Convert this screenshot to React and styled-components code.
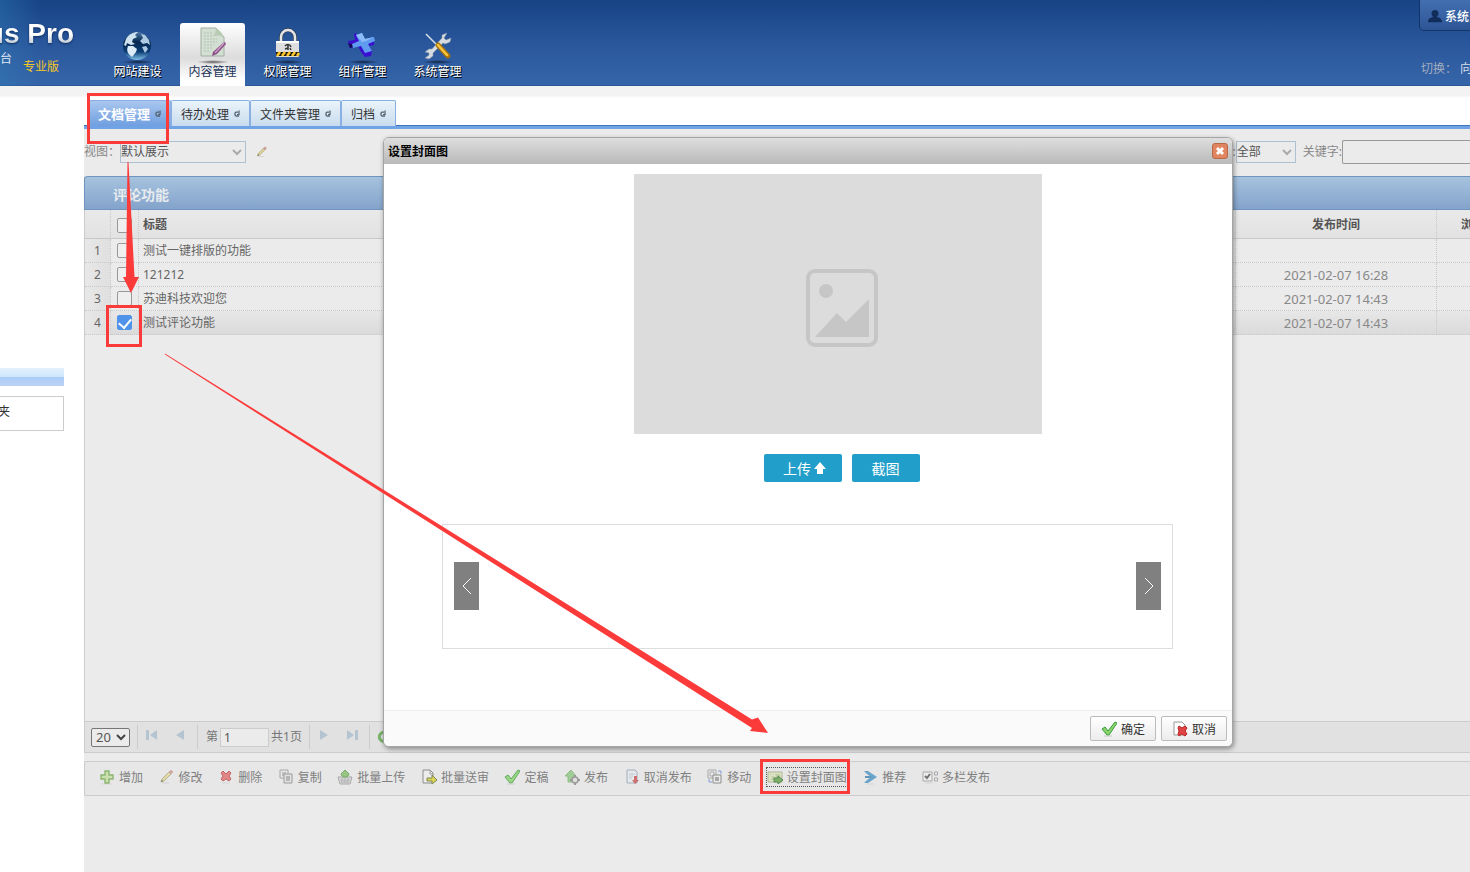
import React from "react";
import styled, { createGlobalStyle, css } from "styled-components";

const navItems = [
  { icon: "globe", label: "网站建设" },
  { icon: "document", label: "内容管理", active: true },
  { icon: "lock", label: "权限管理" },
  { icon: "component", label: "组件管理" },
  { icon: "tools", label: "系统管理" }
];

const tabs = [
  { label: "文档管理", active: true },
  { label: "待办处理" },
  { label: "文件夹管理" },
  { label: "归档" }
];

const rows = [
  { title: "测试一键排版的功能", time: "" },
  { title: "121212", time: "2021-02-07 16:28" },
  { title: "苏迪科技欢迎您", time: "2021-02-07 14:43" },
  { title: "测试评论功能", time: "2021-02-07 14:43", checked: true }
];

const actions = [
  { icon: "add", label: "增加" },
  { icon: "pencil", label: "修改" },
  { icon: "remove", label: "删除" },
  { icon: "copy", label: "复制" },
  { icon: "upload", label: "批量上传" },
  { icon: "submit", label: "批量送审" },
  { icon: "check", label: "定稿" },
  { icon: "publish", label: "发布" },
  { icon: "unpublish", label: "取消发布" },
  { icon: "move", label: "移动" },
  { icon: "cover", label: "设置封面图", focused: true },
  { icon: "recommend", label: "推荐" },
  { icon: "columns", label: "多栏发布" }
];

const navIcons = {
  globe: (
    <>
      <defs>
        <linearGradient id="sea" x1="0" y1="0" x2="0" y2="1">
          <stop offset="0" stopColor="#4f7ba8" />
          <stop offset=".35" stopColor="#06294f" />
          <stop offset=".7" stopColor="#0a3c74" />
          <stop offset="1" stopColor="#7fc0ea" />
        </linearGradient>
      </defs>
      <circle cx="15" cy="21" r="14" fill="url(#sea)" />
      <path d="M4 14c3-5 8-7 12-7l-3 3 2 2-4 2-1 3 3 2-4 1-4-2-1 3-2-1z" fill="#cfe2f0" />
      <path d="M6 21l5 0 4 3-1 3-4 5c-4-3-6-6-4-11z" fill="#dcebf5" />
      <path d="M19 9l4 1 4 5 1 5-3-2-4 1-3-3 3-3zM20 22l4-1 2 3-3 4z" fill="#aecbe3" />
    </>
  ),
  document: (
    <>
      <path d="M4 3h15l8 9v19H4z" fill="#d3dfd2" stroke="#a2b0a1" />
      <path d="M19 3c0 4-2 7-4 8 5-1 9-1 12 2l-3-6z" fill="#b8cbb3" />
      <path
        d="M7 8h8M7 11h8M7 14h13M7 17h13M7 20h10M7 23h9M7 26h6"
        stroke="#b3c3b2"
        strokeDasharray="2 1"
      />
      <path d="M28 17l1 2-9 10-5 2 1-4 10-9z" fill="#8a4d85" />
      <path d="M27 18l-9 10" stroke="#c99bc4" strokeWidth="1.5" />
    </>
  ),
  lock: (
    <>
      <path d="M9 17v-5a7 7 0 0 1 14 0v5" fill="none" stroke="#39414d" strokeWidth="4" />
      <path d="M9 17v-5a7 7 0 0 1 14 0v5" fill="none" stroke="#e4e6e8" strokeWidth="2.500" />
      <rect x="4" y="16" width="23" height="16" rx="1" fill="#dedede" />
      <path d="M4 17h23" stroke="#fff" strokeWidth="2" />
      <path d="M4 27h23v4H4z" fill="#1d1a12" />
      <path d="M5 31l3-4M10 31l3-4M15 31l3-4M20 31l3-4M25 31l2-3" stroke="#ffc72c" strokeWidth="2.500" />
      <path d="M13 21c2-2 5-2 6 1M16 20v5M13 24l3-1M18 23l1 2" fill="none" stroke="#333" strokeWidth="1.500" />
    </>
  ),
  component: (
    <>
      <path d="M1 17l3 2 8-1 1-7-5-3-1 1 1 6-7 1zM1 18l2 5 8-2 3 6 4 5 6-1 1-5-3-5 5-1v-5l-9 2z" fill="#3a0fd0" />
      <path d="M1 18l2 5 8-2v-3l-7 1z" fill="#170a58" />
      <path d="M9 10l6-2 3 6 9-2 1 4-7 3 4 7-7 2-4-7-8 2-1-4 7-3z" fill="#5f9cf0" />
      <path d="M9 10l6-2 3 6 9-2-8 4-4 1z" fill="#8bbcf8" />
    </>
  ),
  tools: (
    <>
      <path d="M25 8l-3 5 2 2 5-2-1 4-5 2-2-1-10 10v3l-4 3-4-1 4-3v-2l-4-1 4-3h3l10-11v-3z" fill="#d5dbe0" stroke="#8795a3" strokeWidth=".5" />
      <path d="M4 9l12 12" stroke="#d8dfe5" strokeWidth="1.500" />
      <path d="M16 20l10 11" stroke="#a8730d" strokeWidth="5" strokeLinecap="round" />
      <path d="M16 20l9 10" stroke="#f7c63f" strokeWidth="2.500" strokeLinecap="round" />
    </>
  )
};

const icons = {
  reload: <path d="M12 12H6l-2-2V6l2-2h4M12 1v8H8" fill="none" stroke="#526170" strokeWidth="2.500" />,
  pencil: (
    <>
      <path d="M3 14h7" stroke="#ccc" />
      <path d="M2 13l1-3 7-7 2 2-7 7z" fill="#e3d795" stroke="#9b9369" strokeWidth=".8" />
      <path d="M10 3l2-2 2 2-2 2z" fill="#d49a96" stroke="#a87" strokeWidth=".5" />
      <path d="M2 13l1-2 1 1z" fill="#444" />
    </>
  ),
  add: (
    <>
      <path d="M3 15h10" stroke="#d3d3d3" />
      <path d="M6 2h4v4h4v4h-4v4H6v-4H2V6h4z" fill="#c5dfa0" stroke="#76a954" strokeWidth="1.400" />
    </>
  ),
  remove: (
    <>
      <path d="M4 14h8" stroke="#d3d3d3" />
      <path d="M3 4l2-2 3 3 3-3 2 2-2 3 2 3-2 2-3-2-3 2-2-2 2-3z" fill="#e07070" stroke="#b94444" />
    </>
  ),
  copy: (
    <>
      <path d="M2 1h8v8H2z" fill="#e6e6e6" stroke="#999" />
      <path d="M4 3h4v4H4z" fill="#b5b5b5" />
      <path d="M6 5h8v9H6z" fill="#e0e0e0" stroke="#888" />
      <path d="M8 7h4v5H8z" fill="#aaa" />
    </>
  ),
  upload: (
    <>
      <path d="M1 8h14l-2 7H3z" fill="#d7d7d7" stroke="#999" />
      <path d="M3 11h10M4 13h8M5 9v5M8 9v5M11 9v5" stroke="#aaa" />
      <path d="M8 1l4 4-1 2h-1v1H6V7H5L4 5z" fill="#86bf6c" stroke="#5a9b48" />
    </>
  ),
  submit: (
    <>
      <path d="M2 1h7l3 3v10H2z" fill="#eee" stroke="#777" />
      <path d="M9 1v4h3" fill="none" stroke="#888" />
      <path d="M6 9h5V6l5 5-5 4v-3H6z" fill="#d8cf35" stroke="#65752e" />
    </>
  ),
  check: (
    <>
      <path d="M1 8l3-2 3 4 7-9 2 1-8 12H6z" fill="#8bd36d" stroke="#389b3a" />
      <path d="M3 15h8" stroke="#c6c6c6" />
    </>
  ),
  publish: (
    <>
      <path d="M7 1l5 6H9v6H4V7H1z" fill="#8fc784" stroke="#79b26f" />
      <circle cx="11" cy="11" r="3" fill="#ddd" stroke="#888" strokeWidth="1.500" />
      <path d="M11 6v2M11 14v2M6 11h2M14 11h2" stroke="#888" strokeWidth="2" />
    </>
  ),
  unpublish: (
    <>
      <path d="M3 1h8l2 2v11H3z" fill="#e6e9ed" stroke="#91a0b3" />
      <path d="M5 5h6M5 7h4M5 9h3" stroke="#b5c5cf" />
      <path d="M10 7h3v4h2l-4 4-3-4h2z" fill="#c95050" />
    </>
  ),
  move: (
    <>
      <path d="M1 1h8v8H1zM3 3h4v4H3z" fill="#eee" stroke="#999" />
      <path d="M6 6h8v8H6z" fill="#eee" stroke="#777" />
      <path d="M8 8h4v4H8z" fill="#999" />
      <path d="M11 2h3v3M5 13H2v-3" fill="none" stroke="#718bd1" />
    </>
  ),
  cover: (
    <>
      <path d="M1 3h14v10H1z" fill="#dce4b9" stroke="#9fa687" />
      <path d="M3 5h10v6H3z" fill="#b6c795" />
      <path d="M4 10V6h4v3" fill="none" stroke="#eef4d9" />
      <path d="M7 9h4V7l5 4-5 4v-2H7z" fill="#63a24a" stroke="#39742f" />
    </>
  ),
  recommend: (
    <>
      <path d="M2 2h4l9 6-9 6H2l3-3 4-3-4-3z" fill="#4b94c4" />
      <path d="M3 7h6v2H3z" fill="#3c83b5" />
      <path d="M4 15h8" stroke="#d0d0d0" />
    </>
  ),
  columns: (
    <>
      <path d="M1 3h9v9H1z" fill="#eee" stroke="#999" />
      <path d="M3 7l2 2 3-4" fill="none" stroke="#555" strokeWidth="2" />
      <path d="M12.500 3h3v3h-3zM12.500 9h3v3h-3z" fill="#eee" stroke="#999" />
      <path d="M3 14h8" stroke="#d0d0d0" />
    </>
  ),
  cancel: (
    <>
      <path d="M2 1h8l3 3v10H2z" fill="#fff" stroke="#999" />
      <path d="M6 7l1-2 3 2 3-2 2 2-2 3 2 3-2 2-3-2-3 2-1-2 1-3z" fill="#e04444" stroke="#b82525" />
    </>
  ),
  first: <path d="M2 3h3v10H2zM13 3v10L6 8z" fill="#b4c4d0" />,
  prev: <path d="M12 3v10L4 8z" fill="#b4c4d0" />,
  next: <path d="M4 3v10l8-5z" fill="#b4c4d0" />,
  last: <path d="M3 3v10l7-5zM11 3h3v10h-3z" fill="#b4c4d0" />,
  refresh: <path d="M13 4a6 5 0 1 0 1 7" fill="none" stroke="#79b36a" strokeWidth="3" />
};

const Icon = ({ name, size = 16 }) => (
  <Svg viewBox="0 0 16 16" width={size} height={size} aria-hidden="true">
    {icons[name]}
  </Svg>
);

const Select = ({ id, label, value, kind }) => (
  <SelectBox kind={kind}>
    <NativeSelect id={id} aria-label={label} kind={kind} defaultValue={value}>
      <option>{value}</option>
    </NativeSelect>
    <Chevron viewBox="0 0 10 8" $dark={kind === "page"} aria-hidden="true">
      <path d="M1 2l4 4 4-4" />
    </Chevron>
  </SelectBox>
);

const Header = () => (
  <TopBar>
    <Brand>
      <Wordmark>
        <span>us Pro</span>
      </Wordmark>
      <Tagline>
        <span>台</span>
        <Edition>专业版</Edition>
      </Tagline>
    </Brand>
    <Nav>
      {navItems.map(item => (
        <NavLink href="#" key={item.label} $active={item.active}>
          <NavPicture viewBox="0 0 32 38" aria-hidden="true">
            <defs>
              <radialGradient id={"shade-" + item.icon}>
                <stop offset="0" stopColor="#000" stopOpacity=".6" />
                <stop offset="1" stopColor="#000" stopOpacity="0" />
              </radialGradient>
            </defs>
            <ellipse cx="16" cy="37" rx="16" ry="2" fill={"url(#shade-" + item.icon + ")"} />
            {navIcons[item.icon]}
          </NavPicture>
          {item.label}
        </NavLink>
      ))}
    </Nav>
    <Account>
      <UserButton>
        <svg width="14" height="14" viewBox="0 0 16 16" aria-hidden="true">
          <path d="M4 5a4 4 0 0 1 8 0c0 2-1 3-2 4 4 1 6 2 6 6H0c0-4 2-5 6-6-1-1-2-2-2-4z" fill="#122d5c" />
        </svg>
        系统
      </UserButton>
      <Switcher>
        <span>切换：</span>
        <SiteLink href="#">向</SiteLink>
      </Switcher>
    </Account>
  </TopBar>
);

const CoverDialog = () => (
  <Dialog role="dialog" aria-labelledby="dialog-title">
    <DialogHeader>
      <DialogTitle id="dialog-title">设置封面图</DialogTitle>
      <CloseButton aria-label="关闭">
        <svg width="10" height="10" viewBox="0 0 10 10">
          <path d="M2 2l6 6M8 2l-6 6" stroke="#fff" strokeWidth="3" />
        </svg>
      </CloseButton>
    </DialogHeader>
    <DialogBody>
      <PreviewArea>
        <Preview>
          <svg width="72" height="78" viewBox="0 0 72 78" aria-hidden="true">
            <rect x="2" y="2" width="68" height="74" rx="7" fill="none" stroke="#c6c6c6" strokeWidth="4" />
            <ellipse cx="20" cy="22" rx="7" ry="7" fill="#c6c6c6" />
            <path d="M9 68l22-24 9 9 23-23v38z" fill="#c6c6c6" />
          </svg>
        </Preview>
        <PreviewButtons>
          <BlueButton $wide>
            上传
            <svg width="12" height="12" viewBox="0 0 12 12" aria-hidden="true">
              <path d="M6 0l6 7H9v5H3V7H0z" fill="#fff" />
            </svg>
          </BlueButton>
          <BlueButton>截图</BlueButton>
        </PreviewButtons>
      </PreviewArea>
      <Gallery>
        <Arrow aria-label="上一张">
          <svg width="10" height="18" viewBox="0 0 10 18">
            <path d="M9 1L1 9l8 8" fill="none" stroke="#fff" />
          </svg>
        </Arrow>
        <Arrow aria-label="下一张">
          <svg width="10" height="18" viewBox="0 0 10 18">
            <path d="M1 1l8 8-8 8" fill="none" stroke="#fff" />
          </svg>
        </Arrow>
      </Gallery>
    </DialogBody>
    <DialogFooter>
      <FooterButton>
        <Icon name="check" />
        确定
      </FooterButton>
      <FooterButton>
        <Icon name="cancel" />
        取消
      </FooterButton>
    </DialogFooter>
  </Dialog>
);

const App = () => (
  <Page>
    <GlobalStyle />
    <Header />
    <Strip />
    <Body>
      <Sidebar>
        <SideBand />
        <SideBox>文件夹</SideBox>
      </Sidebar>
      <Main>
        <TabBar>
          {tabs.map(tab => (
            <Tab key={tab.label} $active={tab.active}>
              {tab.label}
              <Icon name="reload" size={8} />
            </Tab>
          ))}
        </TabBar>
        <Filters>
          <FilterLabel htmlFor="view">视图：</FilterLabel>
          <Select id="view" value="默认展示" kind="view" />
          <IconButton aria-label="编辑视图" $wide>
            <Icon name="pencil" size={12} />
          </IconButton>
          <FilterEnd>
            <label htmlFor="state">:</label>
            <Select id="state" label="状态" value="全部" kind="state" />
            <KeywordLabel htmlFor="keyword">关键字:</KeywordLabel>
            <Keyword id="keyword" />
          </FilterEnd>
        </Filters>
        <Panel>
          <PanelTitle>评论功能</PanelTitle>
          <GridArea>
            <Grid>
              <colgroup>
                <Col $size="26px" />
                <Col $size="28px" />
                <Col />
                <Col $size="201px" />
                <Col $size="33px" />
              </colgroup>
              <thead>
                <tr>
                  <Th />
                  <Th>
                    <Checkbox aria-label="全选" />
                  </Th>
                  <Th $left>标题</Th>
                  <Th>发布时间</Th>
                  <Th $cut>浏览次数</Th>
                </tr>
              </thead>
              <tbody>
                {rows.map((row, i) => (
                  <Row key={row.title} $selected={row.checked}>
                    <NumberCell>{i + 1}</NumberCell>
                    <Td>
                      <Checkbox aria-label={row.title} defaultChecked={row.checked} />
                    </Td>
                    <Td $left>{row.title}</Td>
                    <Td $time>{row.time}</Td>
                    <Td />
                  </Row>
                ))}
              </tbody>
            </Grid>
          </GridArea>
          <Pager>
            <Select label="每页条数" value="20" kind="page" />
            <Divider />
            <PageIcons>
              <IconButton aria-label="首页">
                <Icon name="first" />
              </IconButton>
              <IconButton aria-label="上一页">
                <Icon name="prev" />
              </IconButton>
            </PageIcons>
            <Divider />
            <PageLabel htmlFor="page">第</PageLabel>
            <PageInput id="page" defaultValue="1" />
            <span>共1页</span>
            <Divider />
            <PageIcons>
              <IconButton aria-label="下一页">
                <Icon name="next" />
              </IconButton>
              <IconButton aria-label="末页">
                <Icon name="last" />
              </IconButton>
            </PageIcons>
            <Divider />
            <IconButton aria-label="刷新">
              <Icon name="refresh" />
            </IconButton>
          </Pager>
        </Panel>
        <ActionBar>
          <ActionList>
            {actions.map(action => (
              <Action key={action.label} $focused={action.focused}>
                <Icon name={action.icon} />
                {action.label}
              </Action>
            ))}
          </ActionList>
        </ActionBar>
      </Main>
    </Body>
    <CoverDialog />
    <Marks viewBox="0 0 1000 800" aria-hidden="true">
      <g fill="none" stroke="#fb3a3a" strokeWidth="3">
        <path d="M88.500 94.500h79v48h-79z" />
        <path d="M107.500 306.500h33v39h-33z" />
        <path d="M761.500 760.500h87v32h-87z" />
      </g>
      <g fill="#fb3a3a">
        <path d="M127.500 162h1l6 115h4.500l-8 16-8-16h3z" />
        <path d="M165 353.500l587 366 6-2 10 15.500-18-2 2-3-587-373.500z" />
      </g>
    </Marks>
  </Page>
);

export default App;

const GlobalStyle = createGlobalStyle`
  * {
    box-sizing: border-box;
  }
  body {
    margin: 0;
    background: #fff;
    overflow: hidden;
  }
  body, button, input, select {
    font-family: "Noto Sans", "Noto Sans CJK SC", sans-serif;
    font-size: 12px;
  }
  button {
    padding: 0;
    border: 0;
    background: none;
    cursor: pointer;
  }
`;

const Page = styled.div`
  position: relative;
  display: flex;
  flex-direction: column;
  min-height: 100vh;
  overflow: hidden;
  color: #333;
  line-height: 18px;
`;

const Svg = styled.svg`
  flex: none;
  display: block;
`;

const TopBar = styled.header`
  display: flex;
  height: 86px;
  background: linear-gradient(#174385, #2d5a9f 60%, #3565a9);
  box-shadow: inset 0 -1px 0 #2b5796;
`;

const Brand = styled.div`
  display: flex;
  flex-direction: column;
  width: 105px;
  padding-top: 18px;
  overflow: hidden;
  background: linear-gradient(90deg, rgba(47, 127, 184, 0.4), rgba(47, 127, 184, 0) 40px);
`;

const Wordmark = styled.div`
  display: flex;
  justify-content: flex-end;
  width: 74px;
  height: 32px;
  font: bold 28px/32px "Liberation Sans", sans-serif;
  white-space: nowrap;
  filter: drop-shadow(0 1px 1px #0d2c5e);
  span {
    background: linear-gradient(#fff 50%, #b9c3d0 85%);
    background-clip: text;
    color: transparent;
  }
`;

const Tagline = styled.div`
  display: flex;
  gap: 11px;
  color: #e4ebf5;
`;

const Edition = styled.span`
  padding-top: 8px;
  color: #f9c81e;
`;

const Nav = styled.nav`
  display: flex;
  align-items: flex-end;
  gap: 10px;
  flex: 1;
`;

const NavLink = styled.a`
  display: flex;
  flex-direction: column;
  align-items: center;
  width: 65px;
  height: 63px;
  padding-top: 2px;
  border-radius: 3px 3px 0 0;
  text-decoration: none;
  color: #fff;
  text-shadow: 1px 1px 0 #000;
  ${props =>
    props.$active &&
    css`
      background: linear-gradient(#fff, #dcdcdc 55%, #fff 90%);
      color: #1b3358;
      text-shadow: none;
    `}
`;

const NavPicture = styled.svg`
  width: 32px;
  height: 38px;
  overflow: visible;
`;

const Account = styled.div`
  width: 51px;
  overflow: hidden;
  white-space: nowrap;
`;

const UserButton = styled.button`
  display: flex;
  align-items: center;
  gap: 3px;
  width: 80px;
  height: 31px;
  padding: 2px 0 0 8px;
  border: 1px solid #143666;
  border-top: 0;
  border-radius: 0 0 0 5px;
  background: linear-gradient(#426fb0, #2d5596);
  font-weight: 500;
  color: #fff;
`;

const Switcher = styled.div`
  display: flex;
  gap: 3px;
  padding: 29px 0 0 2px;
  color: #a3adbf;
`;

const SiteLink = styled.a`
  color: #d5dbe6;
  text-decoration: none;
`;

const Strip = styled.div`
  height: 12px;
  background: linear-gradient(#f3f3f3 80%, #fff);
`;

const Body = styled.div`
  display: flex;
  flex: 1;
`;

const Sidebar = styled.aside`
  flex: none;
  width: 84px;
  padding: 270px 20px 0 0;
`;

const SideBand = styled.div`
  height: 18px;
  background: linear-gradient(#e3f1fd, #cfe5fb 50%, #a9cdf5 50%, #bdd1f7);
`;

const SideBox = styled.div`
  display: flex;
  justify-content: flex-end;
  height: 35px;
  margin-top: 10px;
  padding: 6px 53px 0 0;
  border: 1px solid #ccc;
  border-left: 0;
  overflow: hidden;
  white-space: nowrap;
`;

const Main = styled.main`
  flex: 1;
  min-width: 0;
  padding-top: 2px;
  background: linear-gradient(#fff 27px, #ebebeb 27px);
`;

const TabBar = styled.div`
  display: flex;
  height: 29px;
  padding-left: 4px;
  border-bottom: 3px solid #6fa3e6;
  box-shadow: inset 0 -1px 0 #3f76bd;
`;

const Tab = styled.button`
  display: flex;
  align-items: center;
  gap: 4px;
  height: 26px;
  padding: 0 8px 0 9px;
  border: 1px solid #8ab0e3;
  border-bottom: 0;
  border-radius: 2px 2px 0 0;
  background: linear-gradient(#eaf3fa, #c9dced);
  color: #333;
  ${props =>
    props.$active &&
    css`
      background: linear-gradient(#a9c7ef, #709fe0);
      font-size: 13px;
      font-weight: bold;
      color: #fff;
    `}
`;

const Filters = styled.div`
  display: flex;
  align-items: center;
  height: 47px;
  padding-bottom: 2px;
  color: #888;
`;

const FilterLabel = styled.label`
  width: 36px;
`;

const SelectBox = styled.div`
  display: grid;
  align-items: center;
  justify-items: end;
  width: ${props => ({ view: "126px", state: "60px", page: "39px" }[props.kind])};
`;

const NativeSelect = styled.select`
  grid-area: 1 / 1;
  appearance: none;
  width: 100%;
  height: ${props => (props.kind === "page" ? "19px" : "22px")};
  padding: ${props => (props.kind === "page" ? "0 4px" : "0")};
  border: 1px solid ${props => (props.kind === "page" ? "#777" : "#adc1d0")};
  border-radius: ${props => (props.kind === "page" ? "2px" : "0")};
  background: #ebebeb;
  font-size: ${props => (props.kind === "page" ? "13px" : "12px")};
  line-height: 16px;
  color: #555;
`;

const Chevron = styled.svg`
  grid-area: 1 / 1;
  width: 10px;
  height: 8px;
  margin-right: 4px;
  fill: none;
  stroke: ${props => (props.$dark ? "#444" : "#aaa")};
  stroke-width: 2;
  pointer-events: none;
`;

const IconButton = styled.button`
  padding: 0 ${props => (props.$wide ? "10px" : "6px")};
`;

const FilterEnd = styled.div`
  display: flex;
  align-items: center;
  margin-left: auto;
`;

const KeywordLabel = styled.label`
  padding-left: 7px;
`;

const Keyword = styled.input`
  width: 128px;
  height: 24px;
  border: 1px solid #999;
  border-right: 0;
  border-radius: 2px 0 0 2px;
  background: #ebebeb;
`;

const Panel = styled.section`
  border-left: 1px solid #ccc;
`;

const PanelTitle = styled.h2`
  height: 34px;
  margin: 0 0 0 -1px;
  padding: 1px 28px 0;
  border: 1px solid #6f95c0;
  border-right: 0;
  border-radius: 4px 0 0 0;
  background: linear-gradient(#a5c3de, #84a3cb);
  font-size: 14px;
  line-height: 34px;
  color: #e8ebee;
`;

const GridArea = styled.div`
  min-height: 511px;
`;

const Grid = styled.table`
  width: 100%;
  table-layout: fixed;
  border-spacing: 0;
`;

const Col = styled.col`
  width: ${props => props.$size || "auto"};
`;

const cell = css`
  overflow: hidden;
  white-space: nowrap;
  text-align: ${props => (props.$left ? "left" : "center")};
  border-right: 1px dotted #c8c8c8;
  &:last-child {
    border-right: 0;
  }
`;

const Th = styled.th`
  ${cell}
  height: 29px;
  padding: ${props => (props.$cut ? "2px 0 0 24px" : "2px 4px 0")};
  border-bottom: 1px solid #c8c8c8;
  background: linear-gradient(#e9e9e9, #e2e2e2);
  font-weight: bold;
  color: #555;
`;

const Td = styled.td`
  ${cell}
  height: 24px;
  padding: 0 4px;
  border-bottom: 1px dotted #c8c8c8;
  font-size: ${props => (props.$time ? "13px" : "12px")};
  color: ${props => (props.$time ? "#888" : "#666")};
`;

const NumberCell = styled(Td)`
  background: linear-gradient(90deg, #e8e8e8, #dfdfdf);
`;

const Row = styled.tr`
  background: ${props => (props.$selected ? "linear-gradient(#e7e7e7, #dadada)" : "none")};
`;

const Checkbox = styled.input.attrs({ type: "checkbox" })`
  appearance: none;
  display: block;
  width: 15px;
  height: 15px;
  margin: 0 auto;
  border: 1px solid #999;
  border-radius: 2px;
  background: #efefef;
  &:checked {
    border-color: #4f94ea;
    background: #4f94ea;
  }
  &:checked::before {
    content: "";
    display: block;
    width: 6px;
    height: 10px;
    margin: 0 auto;
    border: solid #fff;
    border-width: 0 2px 2px 0;
    transform: rotate(40deg);
  }
`;

const Pager = styled.div`
  display: flex;
  align-items: center;
  height: 32px;
  padding-left: 6px;
  border: 1px solid #ccc;
  border-width: 1px 0;
  background: #e1e1e1;
  color: #777;
`;

const Divider = styled.span`
  width: 1px;
  height: 24px;
  margin-left: 7px;
  background: #ccc;
`;

const PageIcons = styled.div`
  display: flex;
  width: 52px;
  padding-bottom: 4px;
`;

const PageLabel = styled.label`
  padding-left: 8px;
`;

const PageInput = styled.input`
  width: 49px;
  height: 19px;
  margin: 0 2px;
  padding: 0 3px;
  border: 1px solid #ccc;
  background: #ebebeb;
  color: #555;
`;

const ActionBar = styled.div`
  height: 35px;
  margin-top: 8px;
  padding: 0 14px;
  border: 1px solid #ccc;
  border-right: 0;
  border-radius: 2px 0 0 2px;
  background: #e7e7e7;
`;

const ActionList = styled.div`
  display: flex;
  align-items: center;
  justify-content: space-between;
  max-width: 891px;
  height: 30px;
`;

const Action = styled.button`
  display: flex;
  align-items: center;
  gap: 4px;
  height: 18px;
  white-space: nowrap;
  color: #808080;
  outline: ${props => (props.$focused ? "1px dotted #555" : "none")};
  ${Svg} {
    opacity: 0.8;
  }
`;

const Dialog = styled.section`
  position: absolute;
  top: 137px;
  left: 383px;
  width: 850px;
  border: 1px solid #a5a5a5;
  border-radius: 6px;
  overflow: hidden;
  background: #fff;
  box-shadow: 1px 2px 5px rgba(0, 0, 0, 0.4);
`;

const DialogHeader = styled.div`
  display: flex;
  align-items: center;
  justify-content: space-between;
  height: 26px;
  padding: 0 4px;
  background: linear-gradient(#dedede, #b9b9b9);
`;

const DialogTitle = styled.h2`
  margin: 0;
  padding-top: 2px;
  font-size: 12px;
  color: #000;
`;

const CloseButton = styled.button`
  display: grid;
  place-items: center;
  width: 16px;
  height: 16px;
  border: 1px solid #b8694a;
  border-radius: 3px;
  background: #e08560;
`;

const DialogBody = styled.div`
  display: flex;
  flex-direction: column;
  align-items: center;
  gap: 42px;
  height: 546px;
  padding: 10px 59px 0 58px;
`;

const PreviewArea = styled.div`
  display: flex;
  flex-direction: column;
  gap: 20px;
  padding-left: 60px;
`;

const Preview = styled.div`
  display: grid;
  place-items: center;
  width: 408px;
  height: 260px;
  padding: 8px 0 0 8px;
  background: #dcdcdc;
`;

const PreviewButtons = styled.div`
  display: flex;
  justify-content: center;
  gap: 10px;
  padding-left: 8px;
`;

const BlueButton = styled.button`
  display: flex;
  align-items: center;
  justify-content: center;
  gap: 3px;
  width: ${props => (props.$wide ? "78px" : "68px")};
  height: 28px;
  padding-left: ${props => (props.$wide ? "4px" : "0")};
  border-radius: 2px;
  background: #219fca;
  font-size: 14px;
  color: #fff;
`;

const Gallery = styled.div`
  display: flex;
  align-items: center;
  justify-content: space-between;
  align-self: stretch;
  height: 125px;
  padding: 0 11px 2px;
  border: 1px solid #ddd;
`;

const Arrow = styled.button`
  display: grid;
  place-items: center;
  width: 25px;
  height: 48px;
  background: #808080;
`;

const DialogFooter = styled.div`
  display: flex;
  justify-content: flex-end;
  gap: 5px;
  height: 36px;
  padding: 5px;
  border-top: 1px solid #eee;
  background: #fafafa;
`;

const FooterButton = styled.button`
  display: flex;
  align-items: center;
  justify-content: center;
  gap: 4px;
  width: 66px;
  height: 25px;
  border: 1px solid #bbb;
  border-radius: 2px;
  background: linear-gradient(#fff, #ececec);
  color: #333;
`;

const Marks = styled.svg`
  position: absolute;
  top: 0;
  left: 0;
  width: 1000px;
  height: 800px;
  pointer-events: none;
`;
